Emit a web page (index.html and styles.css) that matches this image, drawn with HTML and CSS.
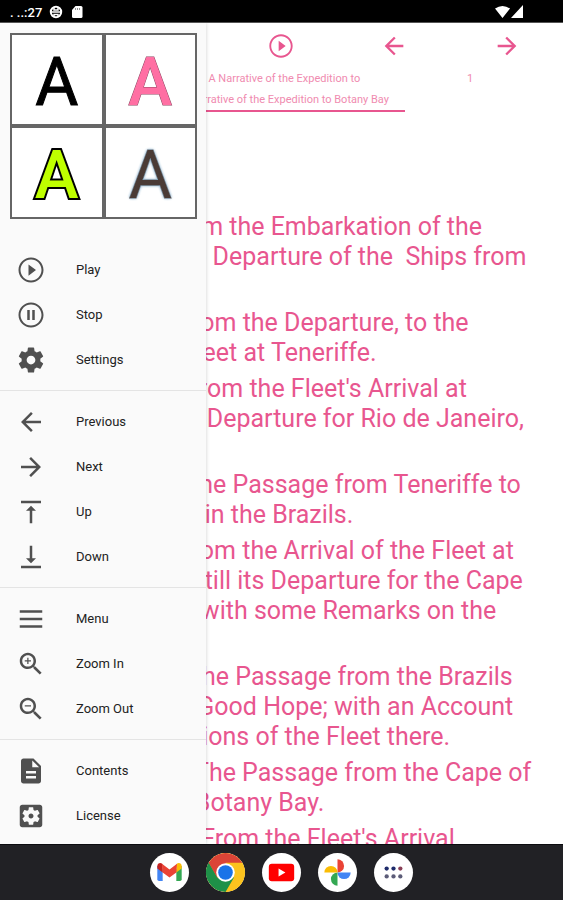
FILE: index.html
```html
<!DOCTYPE html>
<html lang="en">
<head>
<meta charset="utf-8">
<meta name="viewport" content="width=device-width, initial-scale=1">
<title>A Narrative of the Expedition to Botany Bay</title>
<link rel="stylesheet" href="styles.css">
</head>
<body>
<svg class="sprite" aria-hidden="true">
  <symbol id="play" viewBox="0 0 24 24"><path d="M10 16.5l6-4.5-6-4.5v9zM12 2C6.48 2 2 6.48 2 12s4.480 10 10 10 10-4.480 10-10S17.520 2 12 2zm0 18.400c-4.640 0-8.400-3.760-8.400-8.400S7.360 3.600 12 3.600s8.400 3.760 8.400 8.400-3.760 8.400-8.400 8.400z"/></symbol>
  <symbol id="pause" viewBox="0 0 24 24"><path d="M9 16h2V8H9v8zm4-8v8h2V8h-2zM12 2C6.480 2 2 6.480 2 12s4.480 10 10 10 10-4.480 10-10S17.520 2 12 2zm0 18.400c-4.640 0-8.400-3.760-8.400-8.400S7.360 3.600 12 3.600s8.400 3.760 8.400 8.400-3.760 8.400-8.400 8.400z"/></symbol>
  <symbol id="back" viewBox="0 0 24 24"><path d="M20 11H7.830l5.590-5.590L12 4l-8 8 8 8 1.410-1.410L7.830 13H20v-2z"/></symbol>
  <symbol id="forward" viewBox="0 0 24 24"><path d="M12 4l-1.410 1.410L16.170 11H4v2h12.170l-5.580 5.590L12 20l8-8z"/></symbol>
</svg>

<header class="status">
  <span class="clock">. ..:27</span>
  <svg class="status-icon" viewBox="0 0 14 14" aria-hidden="true"><circle cx="7" cy="7" r="5.200" fill="none" stroke="#fff" stroke-width="2"/><path d="M2 7h10M5 2.500V5h4V2.500M5 11.500V9.500h4v2" fill="none" stroke="#fff" stroke-width="1.500"/></svg>
  <svg class="status-icon" viewBox="0 0 14 14" aria-hidden="true"><path d="M5.500 1H11q1.500 0 1.500 1.500v9Q12.500 13 11 13H3.500Q2 13 2 11.500V5z" fill="#fff"/><path d="M5.500 3v2M7.500 3v2M9.500 3v2" stroke="#777" stroke-width=".8"/></svg>
  <svg class="signal" viewBox="0 0 28 14" aria-hidden="true"><path d="M0 3.500Q7.500-1.500 15 3.500L7.500 13zM28 0v13H16z" fill="#fff"/></svg>
</header>

<main class="reader">
  <nav class="toolbar" aria-label="Playback">
    <button class="tool tool-play" aria-label="Play"><svg><use href="#play"/></svg></button>
    <button class="tool" aria-label="Previous"><svg><use href="#back"/></svg></button>
    <button class="tool" aria-label="Next"><svg><use href="#forward"/></svg></button>
  </nav>
  <div class="position">
    <div class="titles">
      <p class="book">A Narrative of the Expedition to<br>Botany Bay</p>
      <p class="section">A Narrative of the Expedition to Botany Bay</p>
    </div>
    <p class="page">1</p>
  </div>
  <article class="chapters">
    <p>CHAPTER I From the Embarkation of the<br>Convicts, to the Departure of the&nbsp; Ships from<br>England.</p>
    <p>CHAPTER II. From the Departure, to the<br>Arrival of the Fleet at Teneriffe.</p>
    <p>CHAPTER III. From the Fleet's Arrival at<br>Teneriffe, to its Departure for Rio de Janeiro,<br>in the Brazils.</p>
    <p>CHAPTER IV. The Passage from Teneriffe to<br>Rio de Janeiro, in the Brazils.</p>
    <p>CHAPTER V. From the Arrival of the Fleet at<br>Rio de Janeiro, till its Departure for the Cape<br>of Good Hope; with some Remarks on the<br>Brazils.</p>
    <p>CHAPTER VI. The Passage from the Brazils<br>to the Cape of Good Hope; with an Account<br>of the Transactions of the Fleet there.</p>
    <p>CHAPTER VII. The Passage from the Cape of<br>Good Hope to Botany Bay.</p>
    <p>CHAPTER VIII. From the Fleet's Arrival</p>
  </article>

  <aside class="drawer">
    <div class="themes">
      <button class="theme theme-black">A</button>
      <button class="theme theme-pink">A</button>
      <button class="theme theme-lime">A</button>
      <button class="theme theme-brown">A</button>
    </div>
    <nav aria-label="Menu">
      <div class="group">
        <button class="item"><svg><use href="#play"/></svg>Play</button>
        <button class="item"><svg><use href="#pause"/></svg>Stop</button>
        <button class="item"><svg viewBox="0 0 24 24"><path d="M19.430 12.980c.04-.32.07-.64.07-.98s-.03-.66-.07-.98l2.110-1.650c.19-.15.24-.42.12-.64l-2-3.460c-.12-.22-.39-.3-.61-.22l-2.490 1c-.52-.4-1.080-.73-1.690-.98l-.38-2.650C14.460 2.180 14.250 2 14 2h-4c-.25 0-.46.18-.49.42l-.38 2.650c-.61.25-1.170.59-1.690.98l-2.490-1c-.23-.09-.49 0-.61.22l-2 3.460c-.13.22-.07.49.12.64l2.110 1.650c-.04.32-.07.65-.07.98s.03.66.07.98l-2.110 1.650c-.19.15-.24.42-.12.64l2 3.460c.12.22.39.3.61.22l2.490-1c.52.4 1.080.73 1.690.98l.38 2.650c.03.24.24.42.49.42h4c.25 0 .46-.18.49-.42l.38-2.650c.61-.25 1.170-.59 1.690-.98l2.490 1c.23.09.49 0 .61-.22l2-3.460c.12-.22.07-.49-.12-.64l-2.110-1.650zM12 15.500c-1.930 0-3.500-1.570-3.500-3.500s1.570-3.500 3.500-3.500 3.500 1.570 3.500 3.500-1.570 3.500-3.500 3.500z"/></svg>Settings</button>
      </div>
      <div class="group">
        <button class="item"><svg><use href="#back"/></svg>Previous</button>
        <button class="item"><svg><use href="#forward"/></svg>Next</button>
        <button class="item"><svg viewBox="0 0 24 24"><path d="M8 11h3v10h2V11h3l-4-4-4 4zM4 3v2h16V3H4z"/></svg>Up</button>
        <button class="item"><svg viewBox="0 0 24 24"><path d="M16 13h-3V3h-2v10H8l4 4 4-4zM4 19v2h16v-2H4z"/></svg>Down</button>
      </div>
      <div class="group">
        <button class="item"><svg viewBox="0 0 24 24"><path d="M3 19h18v-2H3v2zm0-6h18v-2H3v2zm0-8v2h18V5H3z"/></svg>Menu</button>
        <button class="item"><svg viewBox="0 0 24 24"><path d="M15.500 14h-.79l-.28-.27C15.410 12.590 16 11.110 16 9.500 16 5.910 13.090 3 9.500 3S3 5.910 3 9.500 5.910 16 9.500 16c1.610 0 3.090-.59 4.230-1.570l.27.28v.79l5 4.990L20.490 19l-4.990-5zm-6 0C7.010 14 5 11.990 5 9.500S7.010 5 9.500 5 14 7.010 14 9.500 11.990 14 9.500 14zm.5-7H9v2H7v1h2v2h1v-2h2V9h-2z"/></svg>Zoom In</button>
        <button class="item"><svg viewBox="0 0 24 24"><path d="M15.500 14h-.79l-.28-.27C15.410 12.590 16 11.110 16 9.500 16 5.910 13.090 3 9.500 3S3 5.910 3 9.500 5.910 16 9.500 16c1.610 0 3.090-.59 4.230-1.570l.27.28v.79l5 4.990L20.490 19l-4.990-5zm-6 0C7.010 14 5 11.990 5 9.500S7.010 5 9.500 5 14 7.010 14 9.500 11.990 14 9.500 14zM7 9h5v1H7z"/></svg>Zoom Out</button>
      </div>
      <div class="group">
        <button class="item"><svg viewBox="0 0 24 24"><path d="M14 2H6c-1.100 0-1.990.9-1.990 2L4 20c0 1.100.89 2 1.990 2H18c1.100 0 2-.9 2-2V8l-6-6zm2 16H8v-2h8v2zm0-4H8v-2h8v2zm-3-5V3.500L18.500 9H13z"/></svg>Contents</button>
        <button class="item"><svg viewBox="0 0 24 24"><path d="M12 10c-1.100 0-2 .9-2 2s.9 2 2 2 2-.9 2-2-.9-2-2-2zm7-7H5c-1.110 0-2 .9-2 2v14c0 1.100.89 2 2 2h14c1.110 0 2-.9 2-2V5c0-1.100-.89-2-2-2zm-1.750 9c0 .23-.02.46-.05.68l1.480 1.160c.13.11.17.3.08.45l-1.400 2.420c-.09.15-.27.21-.43.15l-1.740-.7c-.36.28-.76.51-1.180.69l-.26 1.850c-.03.17-.18.3-.35.3h-2.800c-.17 0-.32-.13-.35-.29l-.26-1.850c-.43-.18-.82-.41-1.180-.69l-1.740.7c-.16.06-.34 0-.43-.15l-1.400-2.420c-.09-.15-.05-.34.08-.45l1.480-1.160c-.03-.23-.05-.46-.05-.69 0-.23.02-.46.05-.68l-1.480-1.160c-.13-.11-.17-.3-.08-.45l1.400-2.420c.09-.15.27-.21.43-.15l1.740.7c.36-.28.76-.51 1.180-.69l.26-1.850c.03-.17.18-.3.35-.3h2.800c.17 0 .32.13.35.29l.26 1.850c.43.18.82.41 1.180.69l1.740-.7c.16-.06.34 0 .43.15l1.400 2.420c.09.15.05.34-.08.45l-1.480 1.160c.03.23.05.46.05.69z"/></svg>License</button>
      </div>
    </nav>
  </aside>
</main>

<footer class="dock">
  <button class="app" aria-label="Gmail"><svg viewBox="0 0 40 40"><path d="M7.500 13v14q0 1.800 1.800 1.800H13V17z" fill="#4285f4"/><path d="M32.500 13v14q0 1.800-1.800 1.800H27V17z" fill="#34a853"/><path d="M27 12.500V20l5.500-4.200V13.500c0-3-3-4-5-2.500z" fill="#fbbc04"/><path d="M13 12.500V20l-5.500-4.200V13.500c0-3 3-4 5-2.500z" fill="#c5221f"/><path d="M12.300 11l7.700 5.800 7.700-5.800-.7 9-7 5.200-7-5.200z" fill="#ea4335"/></svg></button>
  <button class="app" aria-label="Chrome"><svg viewBox="0 0 40 40"><circle cx="20" cy="20" r="20" fill="#fbbc04"/><path d="M20 20L2.680 10A20 20 0 0 1 37.320 10z" fill="#db4437"/><path d="M20 10h17.320A20 20 0 0 1 20 40l8.700-15z" fill="#fcc31e"/><path d="M2.680 10A20 20 0 0 0 20 40l8.700-15-17.400 0z" fill="#1e9148"/><path d="M2.680 10l8.660 15L20 20V10z" fill="#db4437"/><path d="M2.680 10A20 20 0 0 0 2 29l9.300-4z" fill="#1e9148"/><circle cx="20" cy="20" r="9.500" fill="#fff"/><circle cx="20" cy="20" r="7.500" fill="#1a73e8"/></svg></button>
  <button class="app" aria-label="YouTube"><svg viewBox="0 0 40 40"><rect x="7" y="11" width="26" height="18" rx="3" fill="#f00"/><path d="M17 16v8l7-4z" fill="#fff"/></svg></button>
  <button class="app" aria-label="Photos"><svg viewBox="0 0 40 40"><path d="M20 6.500a6.750 6.750 0 0 1 0 13.500z" fill="#ea4335"/><path d="M33.500 20a6.750 6.750 0 0 1-13.500 0z" fill="#4285f4"/><path d="M20 33.500a6.750 6.750 0 0 1 0-13.500z" fill="#34a853"/><path d="M6.500 20a6.750 6.750 0 0 1 13.500 0z" fill="#fbbc04"/></svg></button>
  <button class="app" aria-label="All apps"><svg viewBox="0 0 40 40"><g fill="#1f2c6b"><circle cx="13" cy="16" r="2.200"/><circle cx="20" cy="16" r="2.200"/></g><circle cx="27" cy="16" r="2.200" fill="#8a4058"/><g fill="#5c5c78"><circle cx="13" cy="24" r="2.200"/><circle cx="20" cy="24" r="2.200"/><circle cx="27" cy="24" r="2.200"/></g></svg></button>
</footer>
</body>
</html>
```
FILE: styles.css
```css
* { box-sizing: border-box; }

body {
  margin: 0;
  height: 100vh;
  display: grid;
  grid-template-rows: 23px minmax(0, 1fr) 56px;
  font-family: Roboto, "Liberation Sans", sans-serif;
  background: #fff;
}

p { margin: 0; }

button {
  margin: 0;
  padding: 0;
  border: 0;
  background: none;
  font: inherit;
  color: inherit;
}

svg { display: block; fill: currentColor; }

.sprite { position: absolute; width: 0; height: 0; }

.status {
  display: flex;
  align-items: center;
  gap: 7px;
  padding: 2px 40px 0 10px;
  background: #000;
  border-bottom: 1px solid #555;
  color: #fff;
}

.clock { font-size: 13px; font-weight: 500; }
.status-icon { width: 14px; height: 14px; }
.signal { width: 28px; height: 14px; margin-left: auto; }

.reader {
  position: relative;
  overflow: hidden;
  color: #e8568f;
}

.toolbar {
  display: grid;
  grid-template-columns: repeat(5, 1fr);
  padding-top: 9px;
}

.tool { display: grid; justify-items: center; }
.tool-play { grid-column: 3; }
.tool svg { width: 28px; height: 28px; }

.position {
  display: grid;
  grid-template-columns: 43% 23%;
  justify-content: end;
  margin-right: 5%;
  padding-top: 12px;
  font-size: 11px;
  line-height: 14px;
  text-align: center;
  color: #f08bb0;
}

/* Columns are shares of the full width, margin included. */
.position {
  grid-template-columns: 43vw 23vw;
}

.book { height: 16px; overflow: hidden; }

.section {
  padding: 5px 0 3px;
  border-bottom: 2px solid #e8568f;
  white-space: nowrap;
}

.chapters {
  display: flex;
  flex-direction: column;
  gap: 6px;
  padding: 100px 16px 0 35px;
  font-size: 25px;
  line-height: 30px;
  white-space: nowrap;
}

.drawer {
  position: absolute;
  top: 0;
  bottom: 0;
  left: 0;
  width: 206px;
  padding-top: 10px;
  background: #fafafa;
  box-shadow: 0 0 4px rgba(0, 0, 0, 0.2);
  color: #222;
}

.themes {
  display: grid;
  grid-template-columns: 1fr 1fr;
  grid-auto-rows: 89px;
  gap: 4px;
  margin: 0 9px 28px 10px;
  border: 2px solid #666;
  background: #666;
}

.theme {
  padding-top: 6px;
  background: #fff;
  font-size: 66px;
  line-height: 80px;
  stroke-linejoin: round;
  paint-order: stroke fill;
}

.theme-black { color: #000; -webkit-text-stroke: 1px #000; }
.theme-pink { color: #ff6fa3; font-weight: 500; -webkit-text-stroke: 1px #8c4560; }
.theme-lime { color: #bfff00; font-weight: 500; -webkit-text-stroke: 4px #000; }
.theme-brown { color: #4a3b36; -webkit-text-stroke: 1px #4a3b36; text-shadow: 0 0 3px #8ab0cc, 0 0 3px #8ab0cc; }

.group { padding: 8px 0; border-top: 1px solid #e4e4e4; }
.group:first-child { padding-top: 0; border-top: 0; }

.item {
  display: flex;
  align-items: center;
  gap: 30px;
  width: 100%;
  height: 45px;
  padding-left: 16px;
  font-size: 13px;
  text-align: left;
}

.item svg { width: 30px; height: 30px; color: #505050; }

.dock {
  display: flex;
  align-items: center;
  justify-content: center;
  gap: 17px;
  background: #212125;
  border-top: 1px solid #0c0c10;
}

.app {
  width: 39px;
  height: 39px;
  border-radius: 50%;
  overflow: hidden;
  background: #fff;
}
```
